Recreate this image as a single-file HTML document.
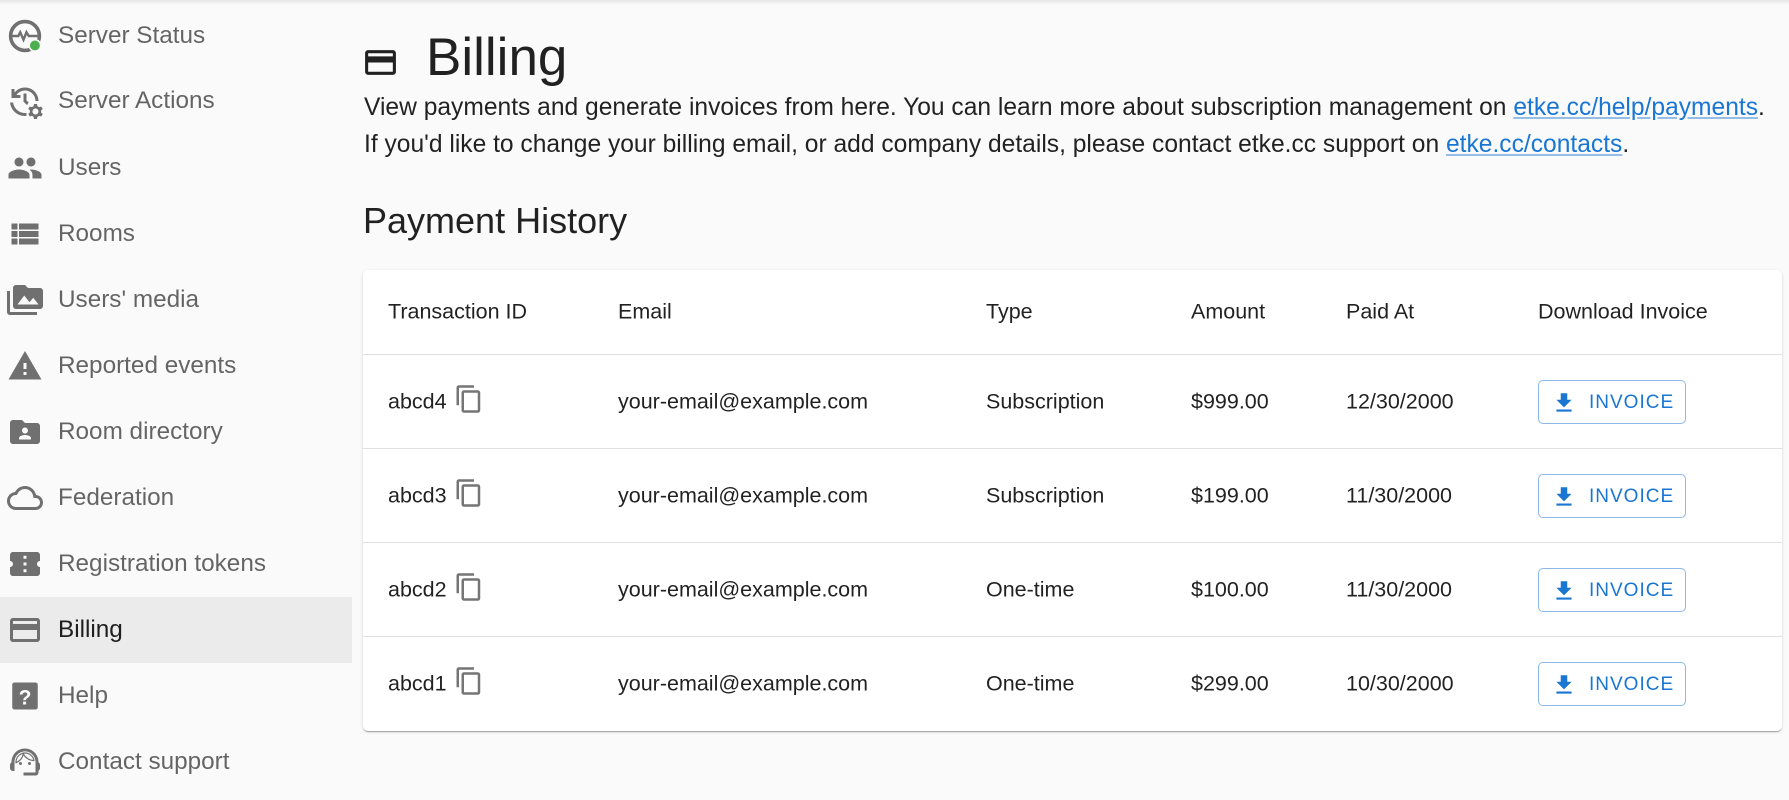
<!DOCTYPE html>
<html><head><meta charset="utf-8"><style>
*{margin:0;padding:0;box-sizing:border-box}
body{width:1789px;height:800px;background:#fafafa;font-family:"Liberation Sans",sans-serif;position:relative;overflow:hidden;color:rgba(0,0,0,.87)}
.topsh{position:absolute;left:0;top:0;width:1789px;height:5px;background:linear-gradient(#e6e6e6,#fafafa)}
.nav{position:absolute;left:0;height:66px;width:352px;display:flex;align-items:center;font-size:24.3px;color:rgba(0,0,0,.6)}
.nav svg{position:absolute;left:7px;top:15px;width:36px;height:36px;fill:#707070}
.nav span{position:absolute;left:58px}
.nav.sel{background:#ebebeb;color:rgba(0,0,0,.87)}
a{color:#1976d2;text-decoration:underline;text-decoration-color:rgba(25,118,210,.45)}
.card{position:absolute;left:363px;top:270px;width:1419px;height:461px;background:#fff;border-radius:5px;box-shadow:0 2px 1px -1px rgba(0,0,0,.2),0 1px 1px 0 rgba(0,0,0,.14),0 1px 3px 0 rgba(0,0,0,.12)}
.row{position:absolute;left:0;width:1419px;border-bottom:1px solid #e0e0e0;font-size:21.5px}
.row div{position:absolute;top:50%;transform:translateY(-50%);white-space:nowrap}
.btn{width:148px;height:44px;border:1px solid rgba(25,118,210,.5);border-radius:5px;color:#1976d2;font-size:19px;letter-spacing:1px}
.btn svg{position:absolute;left:12px;top:9px;width:26px;height:26px;fill:#1976d2}
.btn b{font-weight:normal;position:absolute;left:50px;top:11px}
.cp{width:30px;height:30px;fill:#757575}
</style></head><body>
<div class="topsh"></div>

<div class="nav" style="top:3px"><svg viewBox="0 0 24 24"><circle cx="12" cy="12" r="9.6" fill="none" stroke="#707070" stroke-width="2.4"/><path d="M2.5 12h5l1.3-2.5 2.2 5 2-5 1.5 2.5h7" fill="none" stroke="#707070" stroke-width="1.6"/><circle cx="18.6" cy="18.3" r="4.3" fill="#fafafa"/><circle cx="18.6" cy="18.3" r="3.3" fill="#4caf50"/></svg><span>Server Status</span></div>
<div class="nav" style="top:68px"><svg viewBox="0 0 24 24"><path d="M22.69 18.37l1.14-1-1-1.73-1.45.49c-.32-.27-.68-.48-1.08-.63L20 14h-2l-.3 1.49c-.4.15-.76.36-1.08.63l-1.45-.49-1 1.73 1.14 1c-.08.5-.08.76 0 1.26l-1.14 1 1 1.73 1.45-.49c.32.27.68.48 1.08.63L18 24h2l.3-1.49c.4-.15.76-.36 1.08-.63l1.45.49 1-1.73-1.14-1c.08-.51.08-.77 0-1.27zM19 21c-1.1 0-2-.9-2-2s.9-2 2-2 2 .9 2 2-.9 2-2 2zM11 7v5.41l2.36 2.36 1.04-1.79-1.4-1.39V7h-2zm10 5c0-4.97-4.03-9-9-9-2.83 0-5.35 1.32-7 3.36V4H3v6h6V8H6.26C7.53 6.19 9.63 5 12 5c3.86 0 7 3.14 7 7h2zM4.07 13H2.05c.5 5.05 4.76 9 9.95 9 .34 0 .67-.02 1-.05v-2.02c-.33.04-.66.07-1 .07-4.08 0-7.45-3.05-7.930-7z"/></svg><span>Server Actions</span></div>
<div class="nav" style="top:135px"><svg viewBox="0 0 24 24"><path d="M16 11c1.66 0 2.99-1.34 2.99-3S17.66 5 16 5c-1.66 0-3 1.34-3 3s1.34 3 3 3zm-8 0c1.66 0 2.99-1.34 2.99-3S9.66 5 8 5C6.34 5 5 6.34 5 8s1.34 3 3 3zm0 2c-2.33 0-7 1.17-7 3.5V19h14v-2.5c0-2.33-4.67-3.5-7-3.5zm8 0c-.29 0-.62.02-.97.05 1.16.84 1.97 1.97 1.97 3.45V19h6v-2.5c0-2.33-4.67-3.5-7-3.5z"/></svg><span>Users</span></div>
<div class="nav" style="top:201px"><svg viewBox="0 0 24 24"><path d="M3 14h4v-4H3v4zm0 5h4v-4H3v4zM3 9h4V5H3v4zm5 5h13v-4H8v4zm0 5h13v-4H8v4zM8 5v4h13V5H8z"/></svg><span>Rooms</span></div>
<div class="nav" style="top:267px"><svg viewBox="0 0 24 24"><path d="M2 6H0v5h.01L0 20c0 1.1.9 2 2 2h18v-2H2V6zm20-2h-8l-2-2H6c-1.1 0-1.99.9-1.99 2L4 16c0 1.1.9 2 2 2h16c1.1 0 2-.9 2-2V6c0-1.1-.9-2-2-2zM7 15l4.5-6 3.5 4.51 2.5-3.01L21 15H7z"/></svg><span>Users' media</span></div>
<div class="nav" style="top:333px"><svg viewBox="0 0 24 24"><path d="M1 21h22L12 2 1 21zm12-3h-2v-2h2v2zm0-4h-2v-4h2v4z"/></svg><span>Reported events</span></div>
<div class="nav" style="top:399px"><svg viewBox="0 0 24 24"><path d="M20 6h-8l-2-2H4c-1.1 0-1.99.9-1.99 2L2 18c0 1.1.9 2 2 2h16c1.1 0 2-.9 2-2V8c0-1.1-.9-2-2-2zm-8 3c1.1 0 2 .9 2 2s-.9 2-2 2-2-.9-2-2 .9-2 2-2zm4 8H8v-1c0-1.33 2.67-2 4-2s4 .67 4 2v1z"/></svg><span>Room directory</span></div>
<div class="nav" style="top:465px"><svg viewBox="0 0 24 24"><path d="M12 6c2.62 0 4.88 1.86 5.39 4.43l.3 1.5 1.53.11c1.56.1 2.78 1.41 2.78 2.96 0 1.65-1.35 3-3 3H6c-2.21 0-4-1.79-4-4 0-2.05 1.53-3.76 3.56-3.970l1.07-.11.5-.95C8.08 7.14 9.94 6 12 6m0-2C9.11 4 6.6 5.64 5.35 8.04 2.34 8.36 0 10.91 0 14c0 3.31 2.69 6 6 6h13c2.76 0 5-2.24 5-5 0-2.64-2.05-4.78-4.65-4.96C18.67 6.59 15.64 4 12 4z"/></svg><span>Federation</span></div>
<div class="nav" style="top:531px"><svg viewBox="0 0 24 24"><path d="M22 10V6c0-1.11-.9-2-2-2H4c-1.1 0-1.99.89-1.99 2v4c1.1 0 1.99.9 1.99 2s-.89 2-2 2v4c0 1.1.9 2 2 2h16c1.1 0 2-.9 2-2v-4c-1.1 0-2-.9-2-2s.9-2 2-2zm-9 7.5h-2v-2h2v2zm0-4.5h-2v-2h2v2zm0-4.5h-2v-2h2v2z"/></svg><span>Registration tokens</span></div>
<div class="nav sel" style="top:597px"><svg viewBox="0 0 24 24"><path d="M20 4H4c-1.11 0-1.99.89-1.99 2L2 18c0 1.11.89 2 2 2h16c1.11 0 2-.89 2-2V6c0-1.11-.89-2-2-2zm0 14H4v-6h16v6zm0-10H4V6h16v2z"/></svg><span>Billing</span></div>
<div class="nav" style="top:663px"><svg viewBox="0 0 24 24"><rect x="3.5" y="3" width="17" height="18" rx="1.5"/><text x="12" y="17.5" font-size="14" font-weight="bold" text-anchor="middle" fill="#fafafa" font-family="Liberation Sans">?</text></svg><span>Help</span></div>
<div class="nav" style="top:729px"><svg viewBox="0 0 24 24"><path d="M21 12.22C21 6.73 16.74 3 12 3c-4.69 0-9 3.65-9 9.28-.6.34-1 .98-1 1.72v2c0 1.1.9 2 2 2h1v-6.1c0-3.87 3.13-7 7-7s7 3.13 7 7V19h-8v2h8c1.1 0 2-.9 2-2v-1.22c.59-.31 1-.92 1-1.64v-2.3c0-.7-.41-1.31-1-1.62z"/><circle cx="9" cy="13" r="1"/><circle cx="15" cy="13" r="1"/><path d="M18 11.03C17.52 8.18 15.04 6 12.05 6c-3.03 0-6.29 2.51-6.03 6.45 2.47-1.01 4.33-3.21 4.86-5.89 1.31 2.63 4 4.44 7.12 4.47z" fill="none" stroke="#707070" stroke-width=".8"/></svg><span>Contact support</span></div>

<svg style="position:absolute;left:362px;top:44px;width:37px;height:37px" viewBox="0 0 24 24" fill="#212121"><path d="M20 4H4c-1.11 0-1.99.89-1.99 2L2 18c0 1.11.89 2 2 2h16c1.11 0 2-.89 2-2V6c0-1.11-.89-2-2-2zm0 14H4v-6h16v6zm0-10H4V6h16v2z"/></svg>
<div style="position:absolute;left:426px;top:28px;font-size:53px;line-height:60px">Billing</div>
<div style="position:absolute;left:364px;top:89px;font-size:24.6px;line-height:37px;white-space:nowrap">View payments and generate invoices from here. You can learn more about subscription management on <a>etke.cc/help/payments</a>.<br>If you'd like to change your billing email, or add company details, please contact etke.cc support on <a>etke.cc/contacts</a>.</div>
<div style="position:absolute;left:363px;top:200px;font-size:36px;line-height:42px">Payment History</div>

<div class="card">
<div class="row" style="top:0;height:85px"><div style="left:25px">Transaction ID</div><div style="left:255px">Email</div><div style="left:623px">Type</div><div style="left:828px">Amount</div><div style="left:983px">Paid At</div><div style="left:1175px">Download Invoice</div></div>
<div class="row" style="top:85px;height:94px"><div style="left:25px">abcd4</div><div style="left:91px"><svg class="cp" viewBox="0 0 24 24"><path d="M16 1H4c-1.1 0-2 .9-2 2v14h2V3h12V1zm3 4H8c-1.1 0-2 .9-2 2v14c0 1.1.9 2 2 2h11c1.1 0 2-.9 2-2V7c0-1.1-.9-2-2-2zm0 16H8V7h11v14z"/></svg></div><div style="left:255px">your-email@example.com</div><div style="left:623px">Subscription</div><div style="left:828px">$999.00</div><div style="left:983px">12/30/2000</div><div class="btn" style="left:1175px"><svg viewBox="0 0 24 24"><path d="M19 9h-4V3H9v6H5l7 7 7-7zM5 18v2h14v-2H5z"/></svg><b>INVOICE</b></div></div>
<div class="row" style="top:179px;height:94px"><div style="left:25px">abcd3</div><div style="left:91px"><svg class="cp" viewBox="0 0 24 24"><path d="M16 1H4c-1.1 0-2 .9-2 2v14h2V3h12V1zm3 4H8c-1.1 0-2 .9-2 2v14c0 1.1.9 2 2 2h11c1.1 0 2-.9 2-2V7c0-1.1-.9-2-2-2zm0 16H8V7h11v14z"/></svg></div><div style="left:255px">your-email@example.com</div><div style="left:623px">Subscription</div><div style="left:828px">$199.00</div><div style="left:983px">11/30/2000</div><div class="btn" style="left:1175px"><svg viewBox="0 0 24 24"><path d="M19 9h-4V3H9v6H5l7 7 7-7zM5 18v2h14v-2H5z"/></svg><b>INVOICE</b></div></div>
<div class="row" style="top:273px;height:94px"><div style="left:25px">abcd2</div><div style="left:91px"><svg class="cp" viewBox="0 0 24 24"><path d="M16 1H4c-1.1 0-2 .9-2 2v14h2V3h12V1zm3 4H8c-1.1 0-2 .9-2 2v14c0 1.1.9 2 2 2h11c1.1 0 2-.9 2-2V7c0-1.1-.9-2-2-2zm0 16H8V7h11v14z"/></svg></div><div style="left:255px">your-email@example.com</div><div style="left:623px">One-time</div><div style="left:828px">$100.00</div><div style="left:983px">11/30/2000</div><div class="btn" style="left:1175px"><svg viewBox="0 0 24 24"><path d="M19 9h-4V3H9v6H5l7 7 7-7zM5 18v2h14v-2H5z"/></svg><b>INVOICE</b></div></div>
<div class="row" style="top:367px;height:94px;border-bottom:none"><div style="left:25px">abcd1</div><div style="left:91px"><svg class="cp" viewBox="0 0 24 24"><path d="M16 1H4c-1.1 0-2 .9-2 2v14h2V3h12V1zm3 4H8c-1.1 0-2 .9-2 2v14c0 1.1.9 2 2 2h11c1.1 0 2-.9 2-2V7c0-1.1-.9-2-2-2zm0 16H8V7h11v14z"/></svg></div><div style="left:255px">your-email@example.com</div><div style="left:623px">One-time</div><div style="left:828px">$299.00</div><div style="left:983px">10/30/2000</div><div class="btn" style="left:1175px"><svg viewBox="0 0 24 24"><path d="M19 9h-4V3H9v6H5l7 7 7-7zM5 18v2h14v-2H5z"/></svg><b>INVOICE</b></div></div>
</div>
</body></html>
